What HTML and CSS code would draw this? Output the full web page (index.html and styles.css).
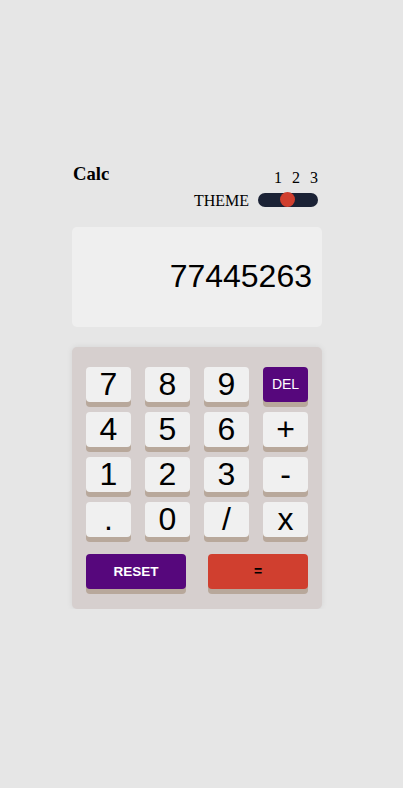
FILE: index.html
```html
<!DOCTYPE html>
<html>
<head>
<meta charset="utf-8">
<link rel="stylesheet" href="styles.css">
</head>
<body>
<main class="calc">
  <header class="top">
    <h3 class="title">Calc</h3>
    <div class="theme">
      <div class="nums"><span>1</span><span>2</span><span>3</span></div>
      <div class="theme-row">
        <span class="theme-label">THEME</span>
        <div class="track"><div class="ball"></div></div>
      </div>
    </div>
  </header>
  <section class="screen">77445263</section>
  <section class="pad">
    <div class="keys">
      <button class="key">7</button>
      <button class="key">8</button>
      <button class="key">9</button>
      <button class="key del">DEL</button>
      <button class="key">4</button>
      <button class="key">5</button>
      <button class="key">6</button>
      <button class="key">+</button>
      <button class="key">1</button>
      <button class="key">2</button>
      <button class="key">3</button>
      <button class="key">-</button>
      <button class="key">.</button>
      <button class="key">0</button>
      <button class="key">/</button>
      <button class="key">x</button>
    </div>
    <div class="actions">
      <button class="wide reset">RESET</button>
      <button class="wide equal">=</button>
    </div>
  </section>
</main>
</body>
</html>
```
FILE: styles.css
```css
html, body {
  margin: 0;
  padding: 0;
  background: #e6e6e6;
}
body {
  font-family: "Liberation Serif", serif;
}
.calc {
  width: 250px;
  margin-left: 72px;
  padding-top: 163px;
}
.top {
  display: flex;
  justify-content: space-between;
  align-items: flex-start;
}
.title {
  margin: 0;
  font-size: 18.72px;
  font-weight: bold;
  color: #000;
  padding-left: 1px;
}
.theme {
  margin-top: 5.5px;
  margin-right: 4px;
  display: flex;
  flex-direction: column;
  align-items: flex-end;
  font-size: 16px;
  color: #000;
}
.nums {
  display: flex;
  gap: 10px;
  margin-bottom: 5px;
}
.theme-row {
  display: flex;
  align-items: center;
  gap: 9px;
}
.theme-label {
  font-size: 16px;
}
.track {
  width: 60px;
  height: 14px;
  border-radius: 7px;
  background: #1b2235;
  display: flex;
  align-items: center;
  justify-content: center;
  margin-top: -2px;
}
.ball {
  width: 15px;
  height: 15px;
  border-radius: 50%;
  background: #d03f2f;
  margin-left: -1px;
}
.screen {
  margin-top: 17px;
  height: 100px;
  background: #efefef;
  border-radius: 5px;
  display: flex;
  align-items: center;
  justify-content: flex-end;
  padding-right: 10px;
  box-sizing: border-box;
  font-family: "Liberation Sans", Arial, sans-serif;
  font-size: 32px;
  color: #000;
}
.pad {
  margin-top: 20px;
  background: #d6cfce;
  border-radius: 5px;
  padding: 20px 14px 20px;
  box-shadow: 0 0 6px rgba(0, 0, 0, 0.08);
}
.keys {
  display: grid;
  grid-template-columns: repeat(4, 45px);
  column-gap: 14px;
  row-gap: 10px;
}
button {
  border: none;
  margin: 0;
  padding: 0;
  font-family: "Liberation Sans", Arial, sans-serif;
  cursor: pointer;
}
.key {
  height: 35px;
  border-radius: 4px;
  background: #f0f0f0;
  box-shadow: 0 5px 0 #b8a89b;
  font-size: 32px;
  color: #000;
  display: flex;
  align-items: center;
  justify-content: center;
}
.del {
  background: #56077c;
  color: #fff;
  font-size: 14px;
}
.actions {
  display: flex;
  justify-content: space-between;
  margin-top: 17px;
}
.wide {
  width: 100px;
  height: 35px;
  border-radius: 4px;
  box-shadow: 0 5px 0 #b8a89b;
  font-size: 14px;
  font-weight: bold;
}
.reset {
  background: #56077c;
  color: #fff;
  font-size: 13.5px;
}
.equal {
  background: #d03f2f;
  color: #000;
}
```
